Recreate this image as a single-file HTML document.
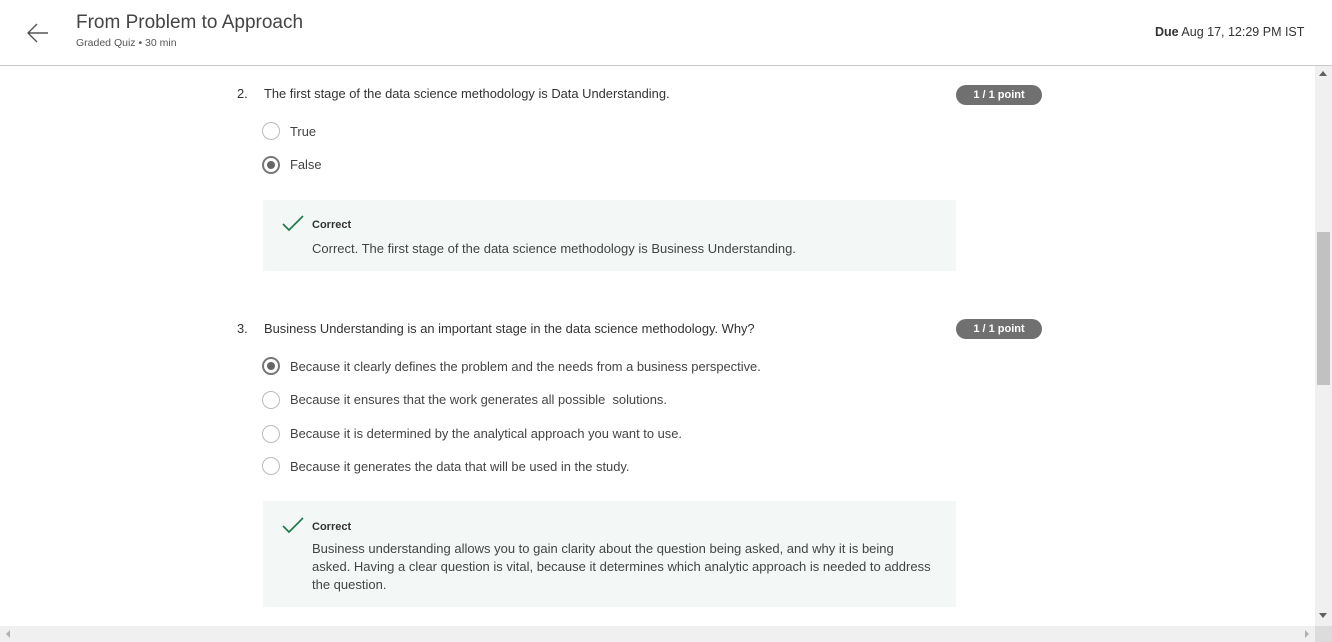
<!DOCTYPE html>
<html><head><meta charset="utf-8"><style>
*{margin:0;padding:0;box-sizing:border-box}
body{width:1332px;height:642px;overflow:hidden;background:#fff;font-family:"Liberation Sans",sans-serif;color:#333;position:relative}
.a{position:absolute;white-space:nowrap}
.hdr{position:absolute;left:0;top:0;width:1332px;height:66px;border-bottom:1px solid #c8c8c8}
.q{font-size:12.9px;color:#333}
.opt{font-size:12.9px;color:#444}
.r{position:absolute;width:18px;height:18px;border:1.5px solid #bbb;border-radius:50%}
.r.s{border:2px solid #777}
.r.s:after{content:"";position:absolute;left:3px;top:3px;width:8px;height:8px;border-radius:50%;background:#666}
.pill{position:absolute;width:86px;height:20px;border-radius:10px;background:#707070;color:#fff;font-size:11px;font-weight:bold;text-align:center;line-height:20px}
.fb{position:absolute;left:263px;width:693px;background:#f3f8f6}
.fb b{position:absolute;left:49px;font-size:11px;color:#333}
.fb p{position:absolute;left:49px;font-size:13px;color:#444;line-height:18px;white-space:nowrap}
.fb svg{position:absolute;left:19px}
</style></head><body>
<div class="hdr"></div>
<svg class="a" style="left:26px;top:22px" width="24" height="22" viewBox="0 0 24 22"><path d="M22 11H2M11 2L2 11l9 9" fill="none" stroke="#555" stroke-width="1.4"/></svg>
<div class="a" style="left:76px;top:12px;font-size:19px;color:#444">From Problem to Approach</div>
<div class="a" style="left:76px;top:37px;font-size:10.5px;color:#555">Graded Quiz • 30 min</div>
<div class="a" style="left:1155px;top:25px;font-size:12.5px;color:#333"><b>Due</b> Aug 17, 12:29 PM IST</div>

<div class="a q" style="left:237px;top:86px">2.</div>
<div class="a q" style="left:264px;top:86px">The first stage of the data science methodology is Data Understanding.</div>
<div class="pill" style="left:956px;top:85px">1 / 1 point</div>
<div class="r" style="left:262px;top:122px"></div><div class="a opt" style="left:290px;top:124px">True</div>
<div class="r s" style="left:262px;top:156px"></div><div class="a opt" style="left:290px;top:157px">False</div>
<div class="fb" style="top:200px;height:71px">
<svg style="top:15px" width="22" height="18" viewBox="0 0 22 18"><path d="M1 9l6 6L21 1" fill="none" stroke="#1f7a4d" stroke-width="1.7"/></svg>
<b style="top:19px">Correct</b>
<p style="top:40px">Correct. The first stage of the data science methodology is Business Understanding.</p>
</div>

<div class="a q" style="left:237px;top:321px">3.</div>
<div class="a q" style="left:264px;top:321px">Business Understanding is an important stage in the data science methodology. Why?</div>
<div class="pill" style="left:956px;top:319px">1 / 1 point</div>
<div class="r s" style="left:262px;top:357px"></div><div class="a opt" style="left:290px;top:359px">Because it clearly defines the problem and the needs from a business perspective.</div>
<div class="r" style="left:262px;top:391px"></div><div class="a opt" style="left:290px;top:392px">Because it ensures that the work generates all possible&nbsp; solutions.</div>
<div class="r" style="left:262px;top:425px"></div><div class="a opt" style="left:290px;top:426px">Because it is determined by the analytical approach you want to use.</div>
<div class="r" style="left:262px;top:457px"></div><div class="a opt" style="left:290px;top:459px">Because it generates the data that will be used in the study.</div>
<div class="fb" style="top:501px;height:106px">
<svg style="top:16px" width="22" height="18" viewBox="0 0 22 18"><path d="M1 9l6 6L21 1" fill="none" stroke="#1f7a4d" stroke-width="1.7"/></svg>
<b style="top:20px">Correct</b>
<p style="top:39px">Business understanding allows you to gain clarity about the question being asked, and why it is being<br>asked. Having a clear question is vital, because it determines which analytic approach is needed to address<br>the question.</p>
</div>

<div class="a" style="left:1315px;top:66px;width:17px;height:560px;background:#f0f0f0"></div>
<div class="a" style="left:1317px;top:232px;width:13px;height:153px;background:#c1c1c1"></div>
<div class="a" style="left:1319px;top:71px;width:0;height:0;border-left:4px solid transparent;border-right:4px solid transparent;border-bottom:5px solid #606060"></div>
<div class="a" style="left:1319px;top:613px;width:0;height:0;border-left:4px solid transparent;border-right:4px solid transparent;border-top:5px solid #606060"></div>
<div class="a" style="left:0;top:626px;width:1315px;height:16px;background:#f0f0f0"></div>
<div class="a" style="left:1315px;top:626px;width:17px;height:16px;background:#dcdcdc"></div>
<div class="a" style="left:6px;top:630px;width:0;height:0;border-top:4px solid transparent;border-bottom:4px solid transparent;border-right:4px solid #b0b0b0"></div>
<div class="a" style="left:1305px;top:630px;width:0;height:0;border-top:4px solid transparent;border-bottom:4px solid transparent;border-left:4px solid #b0b0b0"></div>
</body></html>
